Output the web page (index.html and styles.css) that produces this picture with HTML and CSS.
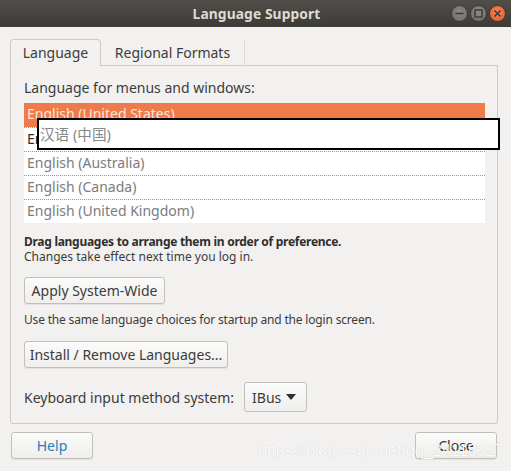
FILE: index.html
```html
<!DOCTYPE html>
<html>
<head>
<meta charset="utf-8">
<link rel="stylesheet" href="styles.css">
</head>
<body>
<div class="window">
  <div class="titlebar">
    <div class="title">Language Support</div>
    <div class="wbtns">
      <span class="wbtn min"><svg width="17" height="17" viewBox="0 0 17 17"><line x1="4.5" y1="8.5" x2="12.5" y2="8.5" stroke="#3c3b37" stroke-width="1.6"/></svg></span>
      <span class="wbtn max"><svg width="17" height="17" viewBox="0 0 17 17"><rect x="5" y="5" width="7" height="7" fill="none" stroke="#3c3b37" stroke-width="1.4"/></svg></span>
      <span class="wbtn close"><svg width="17" height="17" viewBox="0 0 17 17"><path d="M5.5 5.5 L11.5 11.5 M11.5 5.5 L5.5 11.5" stroke="#3c3b37" stroke-width="1.6"/></svg></span>
    </div>
  </div>
  <div class="body">
    <div class="tabs">
      <div class="tab active">Language</div>
      <div class="tab">Regional Formats</div>
      <div class="tabrest"></div>
    </div>
    <div class="panel">
      <div class="label">Language for menus and windows:</div>
      <div class="list">
        <div class="row selected">English (United States)</div>
        <div class="row dark">English (China)</div>
        <div class="row">English (Australia)</div>
        <div class="row">English (Canada)</div>
        <div class="row">English (United Kingdom)</div>
        <div class="dragpop">汉语 (中国)</div>
      </div>
      <div class="hint"><b>Drag languages to arrange them in order of preference.</b><br>Changes take effect next time you log in.</div>
      <div class="btn apply">Apply System-Wide</div>
      <div class="note">Use the same language choices for startup and the login screen.</div>
      <div class="btn install">Install / Remove Languages...</div>
      <div class="kbd">
        <span>Keyboard input method system:</span>
        <div class="combo"><span>IBus</span><svg width="10" height="6" viewBox="0 0 10 6"><path d="M0 0 L10 0 L5 6 Z" fill="#2e2e2e"/></svg></div>
      </div>
    </div>
    <div class="footer">
      <div class="btn help">Help</div>
      <div class="btn closebtn">Close</div>
    </div>
  </div>
  <div class="watermark">https://blog.csdn.net/qq_24118527</div>
</div>
</body>
</html>
```
FILE: styles.css
```css
* { box-sizing: border-box; }
html, body { margin: 0; padding: 0; }
body {
  width: 511px; height: 471px; overflow: hidden;
  background: #f2f1f0;
  font-family: "Noto Sans", "DejaVu Sans", sans-serif;
  font-size: 14px;
  color: #3c3c3c;
}
.window { position: relative; width: 511px; height: 471px; }
.titlebar {
  height: 27px;
  background: linear-gradient(#514f4a, #3c3b37);
  display: flex; align-items: center; justify-content: center;
  position: relative;
}
.title {
  color: #dfdbd2; font-weight: bold; font-size: 13.8px; letter-spacing: 0.1px;
  margin-left: 2px;
}
.wbtns {
  position: absolute; right: 5px; top: 5px;
  display: flex; gap: 2px;
}
.wbtn {
  width: 17px; height: 17px; border-radius: 50%;
  display: block;
  background: radial-gradient(circle at 50% 40%, #8a8985, #6c6b67);
  border: 1px solid #3a3935;
}
.wbtn svg { display: block; margin: -1px; }
.wbtn.close { background: radial-gradient(circle at 50% 40%, #f6875b, #e15a26); }
.body { padding: 12px 13px 0 10px; }
.tabs { display: flex; height: 27px; }
.tab {
  padding: 0 14px; line-height: 26px;
  color: #3c3c3c;
}
.tab.active {
  width: 91px; padding: 0; text-align: center;
  border: 1px solid #cdcbc8; border-bottom: none;
  border-radius: 4px 4px 0 0;
  background: #f2f1f0;
  position: relative; z-index: 1;
  height: 27px;
}
.tab:nth-child(2) {
  width: 144px; text-align: center; padding: 0;
  border-right: 1px solid #dcdad7;
  border-bottom: 1px solid #cdcbc8;
  height: 26px; margin-top: 1px; line-height: 25px;
}
.tabrest { flex: 1; border-bottom: 1px solid #cdcbc8; }
.panel {
  height: 359px;
  border: 1px solid #cdcbc8; border-top: none;
  border-radius: 0 0 3px 3px;
  padding: 12px 13px 0 13px;
  margin-top: -1px;
  position: relative;
}
.label { line-height: 22px; height: 26px; }
.list {
  position: relative; background: #fff; width: 461px;
}
.row {
  height: 24px; line-height: 22px; padding-left: 3px;
  color: #7c7c7c;
  border-top: 1px dotted #f07746;
}
.row.selected { background: #f07b4a; color: #fbe5da; border-top: none; height: 24px; }
.row.dark { color: #2e2e2e; }
.dragpop {
  position: absolute; left: 13px; top: 15px;
  width: 463px; height: 32px;
  background: #fff; border: 2px solid #000;
  color: #888888; line-height: 28px; padding-left: 1px;
  font-size: 14.6px;
  font-family: "Noto Sans", "Noto Sans CJK SC", sans-serif;
}
.hint { margin-top: 11px; line-height: 15px; font-size: 12px; }
.hint b { color: #2e2e2e; letter-spacing: -0.28px; }
.btn {
  display: inline-block;
  border: 1px solid #c1bfbc; border-radius: 3px;
  background: linear-gradient(#fbfbfa, #efeeec);
  box-shadow: 0 1px 0 rgba(0,0,0,0.06);
  height: 27px; line-height: 25px; text-align: center;
}
.apply { margin-top: 13px; width: 141px; }
.note { margin-top: 8px; font-size: 12px; line-height: 15px; letter-spacing: -0.18px; }
.install { margin-top: 14px; width: 204px; }
.kbd { display: flex; align-items: center; margin-top: 14px; gap: 10px; }
.combo {
  width: 63px; height: 30px;
  border: 1px solid #c1bfbc; border-radius: 3px;
  background: linear-gradient(#fbfbfa, #efeeec);
  display: flex; align-items: center; justify-content: space-between;
  padding: 0 10px 0 7px;
}
.footer {
  display: flex; justify-content: space-between;
  margin-top: 8px; padding-left: 1px; padding-right: 1px;
}
.help { width: 82px; color: #1f7fb9; }
.closebtn { width: 82px; color: #2e2e2e; }
.watermark {
  position: absolute; left: 258px; top: 441px;
  font-family: "Liberation Sans", Arial, sans-serif;
  font-size: 16.5px; color: rgba(255,255,255,0.92);
  text-shadow: 0 0 1px rgba(0,0,0,0.18);
  letter-spacing: -0.2px;
}
```
